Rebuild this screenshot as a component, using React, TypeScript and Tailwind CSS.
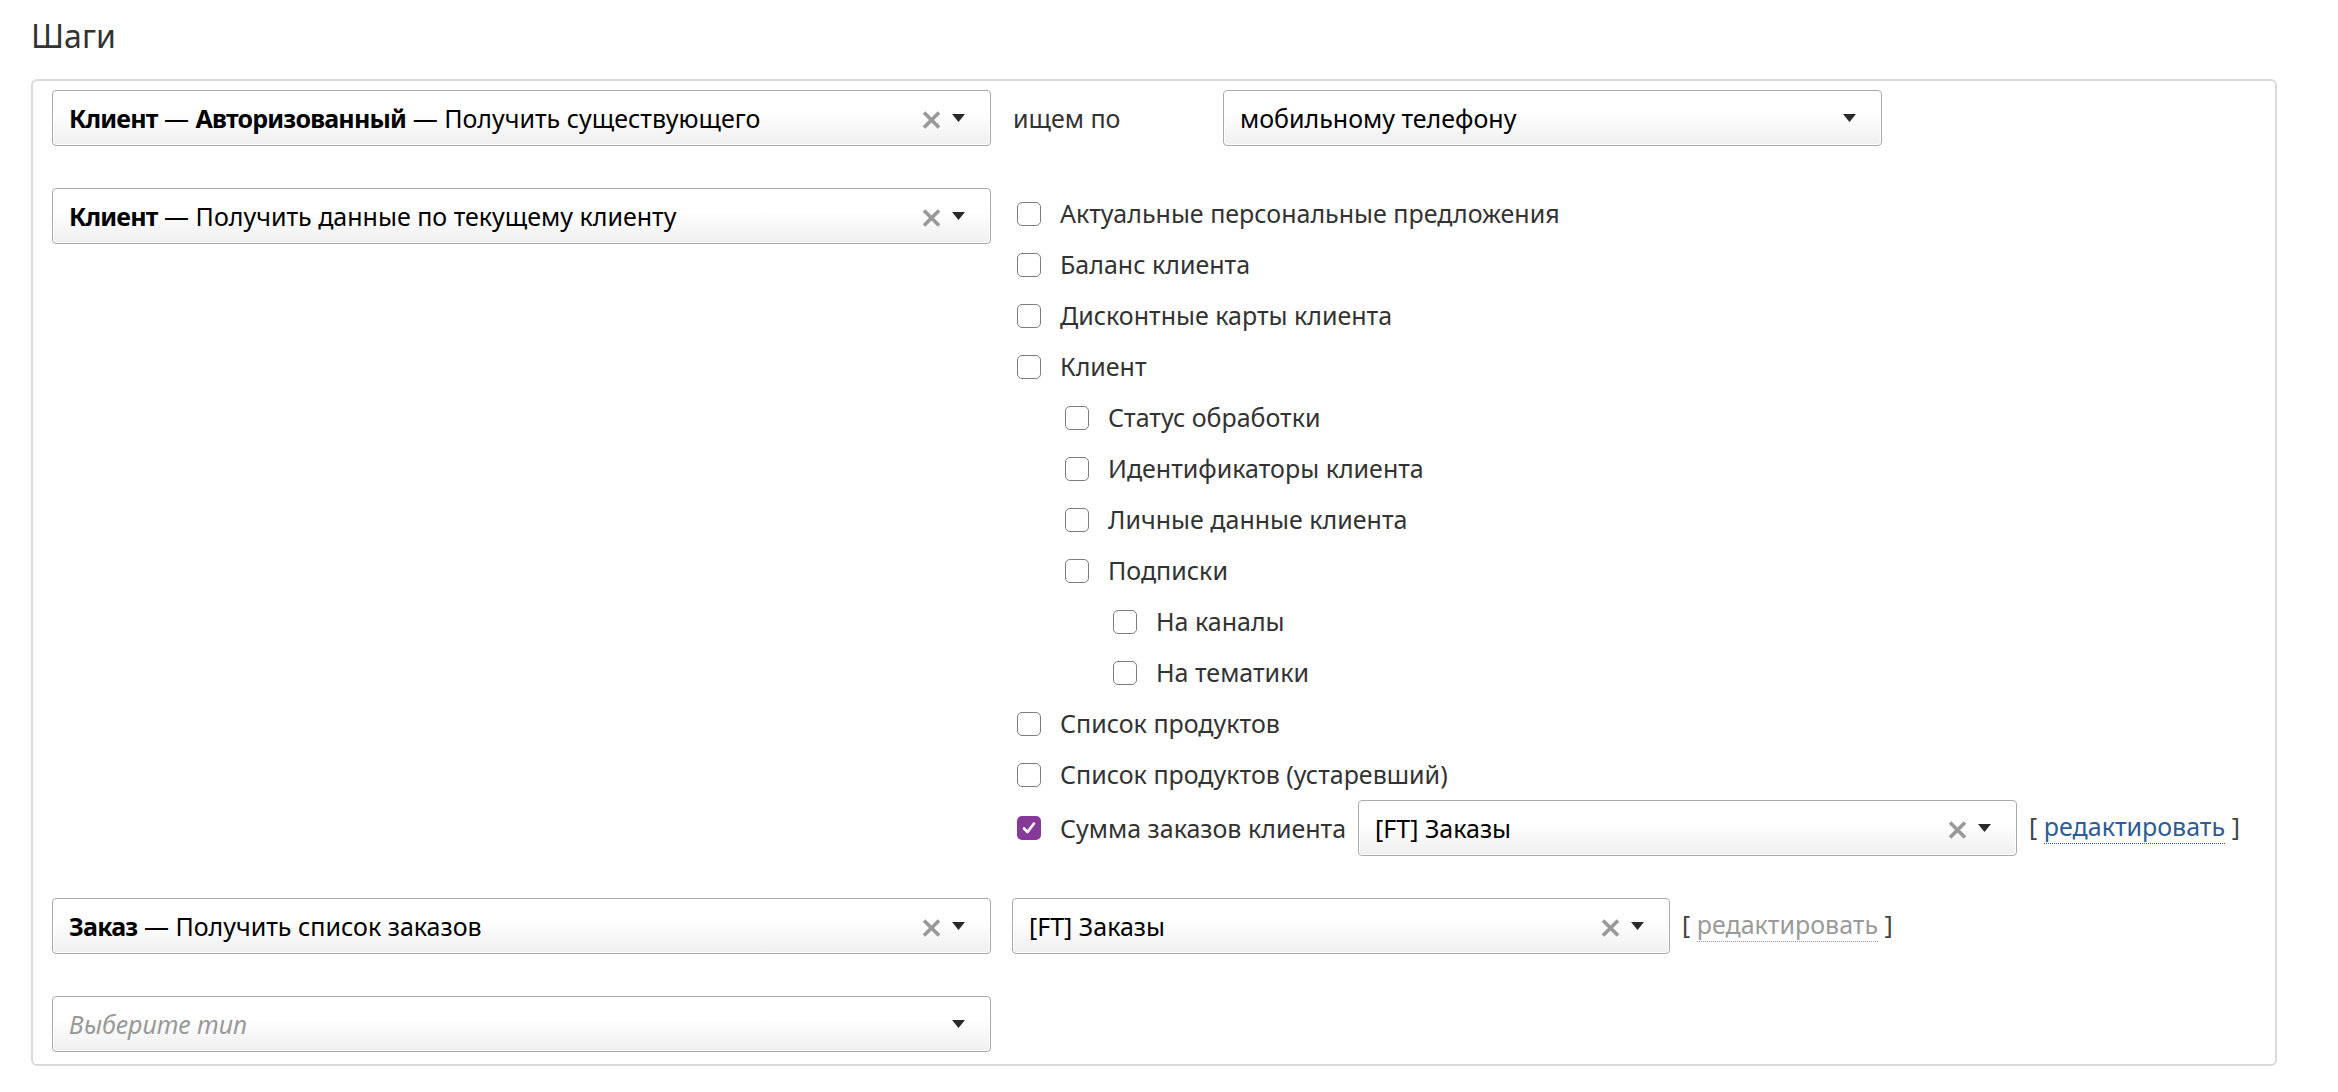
import React from 'react';

// Шаги сценария: селект типа шага слева, параметры шага справа.

type CheckItem = { label: string; level: number; checked?: boolean; extra?: boolean };

const CHECK_ITEMS: CheckItem[] = [
  { label: 'Актуальные персональные предложения', level: 0 },
  { label: 'Баланс клиента', level: 0 },
  { label: 'Дисконтные карты клиента', level: 0 },
  { label: 'Клиент', level: 0 },
  { label: 'Статус обработки', level: 1 },
  { label: 'Идентификаторы клиента', level: 1 },
  { label: 'Личные данные клиента', level: 1 },
  { label: 'Подписки', level: 1 },
  { label: 'На каналы', level: 2 },
  { label: 'На тематики', level: 2 },
  { label: 'Список продуктов', level: 0 },
  { label: 'Список продуктов (устаревший)', level: 0 },
  { label: 'Сумма заказов клиента', level: 0, checked: true, extra: true },
];

const INDENT: Record<number, string> = { 0: 'pl-[5px]', 1: 'pl-[53px]', 2: 'pl-[101px]' };

function ClearIcon() {
  return (
    <svg width="19" height="18" viewBox="0 0 19 18" className="shrink-0">
      <path d="M2 1.5 L17 16.5 M17 1.5 L2 16.5" stroke="#999999" strokeWidth="3.6" strokeLinecap="butt" />
    </svg>
  );
}

function Caret() {
  return (
    <svg width="13" height="8" viewBox="0 0 13 8" className="shrink-0">
      <path d="M0 0 H13 L6.5 8 Z" fill="#2a2a2a" />
    </svg>
  );
}

function Bold({ children }: { children: React.ReactNode }) {
  return <b className="font-bold tracking-[-0.8px]">{children}</b>;
}

function Select({
  children,
  width,
  clearable = true,
  placeholder = false,
}: {
  children: React.ReactNode;
  width: string;
  clearable?: boolean;
  placeholder?: boolean;
}) {
  return (
    <div
      className={`${width} h-[56px] shrink-0 flex items-center pl-[16px] pr-[25px] rounded-[4px] border-[1.5px] border-[#aaaaaa] bg-linear-to-b from-white from-40% to-[#efefef] shadow-[inset_0_0_0_1px_#fff]`}
    >
      <div
        className={`flex-1 truncate text-[25px] leading-[1.4] pt-[1px] ${placeholder ? 'italic text-[#999]' : 'text-black'}`}
      >
        {children}
      </div>
      {clearable && (
        <div className="mr-[11px] mt-[3px]">
          <ClearIcon />
        </div>
      )}
      <Caret />
    </div>
  );
}

function EditLink({ disabled = false }: { disabled?: boolean }) {
  return (
    <span className="text-[25px] leading-none text-[#444] whitespace-nowrap">
      [{' '}
      <span
        className={`border-b-[1.5px] border-dotted ${
          disabled ? 'text-[#9a9a9a] border-[#9a9a9a]' : 'text-[#2d5c96] border-[#2d5c96]'
        }`}
      >
        редактировать
      </span>{' '}
      ]
    </span>
  );
}

function Checkbox({ checked }: { checked?: boolean }) {
  if (checked) {
    return (
      <span className="w-[24px] h-[24px] shrink-0 rounded-[5px] bg-[#87399a] flex items-center justify-center">
        <svg width="16" height="16" viewBox="0 0 16 16">
          <path d="M3 8.5 L6.5 12 L13 3.5" stroke="#fff" strokeWidth="2.6" fill="none" strokeLinecap="round" strokeLinejoin="round" />
        </svg>
      </span>
    );
  }
  return <span className="w-[24px] h-[24px] shrink-0 rounded-[5px] border-[1.5px] border-[#7d7d7d] bg-white" />;
}

export default function App() {
  return (
    <div
      className="min-h-screen bg-white px-[31px] pt-[12px] text-[#333]"
      style={{ fontFamily: '"Noto Sans", "Open Sans", sans-serif' }}
    >
      <h2 className="text-[32px] leading-[48px] font-normal text-[#333]">Шаги</h2>

      <div className="mt-[19px] w-[2246px] rounded-[6px] border-2 border-[#d9d9d9] px-[19px] pt-[9px] pb-[12px]">
        {/* Клиент — Авторизованный */}
        <div className="flex items-center">
          <Select width="w-[939px]">
            <Bold>Клиент</Bold> — <Bold>Авторизованный</Bold> — Получить существующего
          </Select>
          <div className="ml-[22px] w-[210px] text-[25px] leading-none">ищем по</div>
          <Select width="w-[659px]" clearable={false}>
            мобильному телефону
          </Select>
        </div>

        {/* Клиент — данные */}
        <div className="mt-[42px] flex items-start">
          <Select width="w-[939px]">
            <Bold>Клиент</Bold> — Получить данные по текущему клиенту
          </Select>
          <div className="ml-[21px] flex flex-col">
            {CHECK_ITEMS.map((item) => (
              <div key={item.label} className={`min-h-[51px] flex items-center ${INDENT[item.level]}`}>
                <Checkbox checked={item.checked} />
                <span className="ml-[19px] text-[25px] leading-none whitespace-nowrap">{item.label}</span>
                {item.extra && (
                  <>
                    <div className="ml-[12px]">
                      <Select width="w-[659px]">[FT] Заказы</Select>
                    </div>
                    <div className="ml-[12px]">
                      <EditLink />
                    </div>
                  </>
                )}
              </div>
            ))}
          </div>
        </div>

        {/* Заказ */}
        <div className="mt-[42px] flex items-center">
          <Select width="w-[939px]">
            <Bold>Заказ</Bold> — Получить список заказов
          </Select>
          <div className="ml-[21px]">
            <Select width="w-[658px]">[FT] Заказы</Select>
          </div>
          <div className="ml-[12px]">
            <EditLink disabled />
          </div>
        </div>

        {/* Новый шаг */}
        <div className="mt-[42px] flex items-center">
          <Select width="w-[939px]" clearable={false} placeholder>
            Выберите тип
          </Select>
        </div>
      </div>
    </div>
  );
}
